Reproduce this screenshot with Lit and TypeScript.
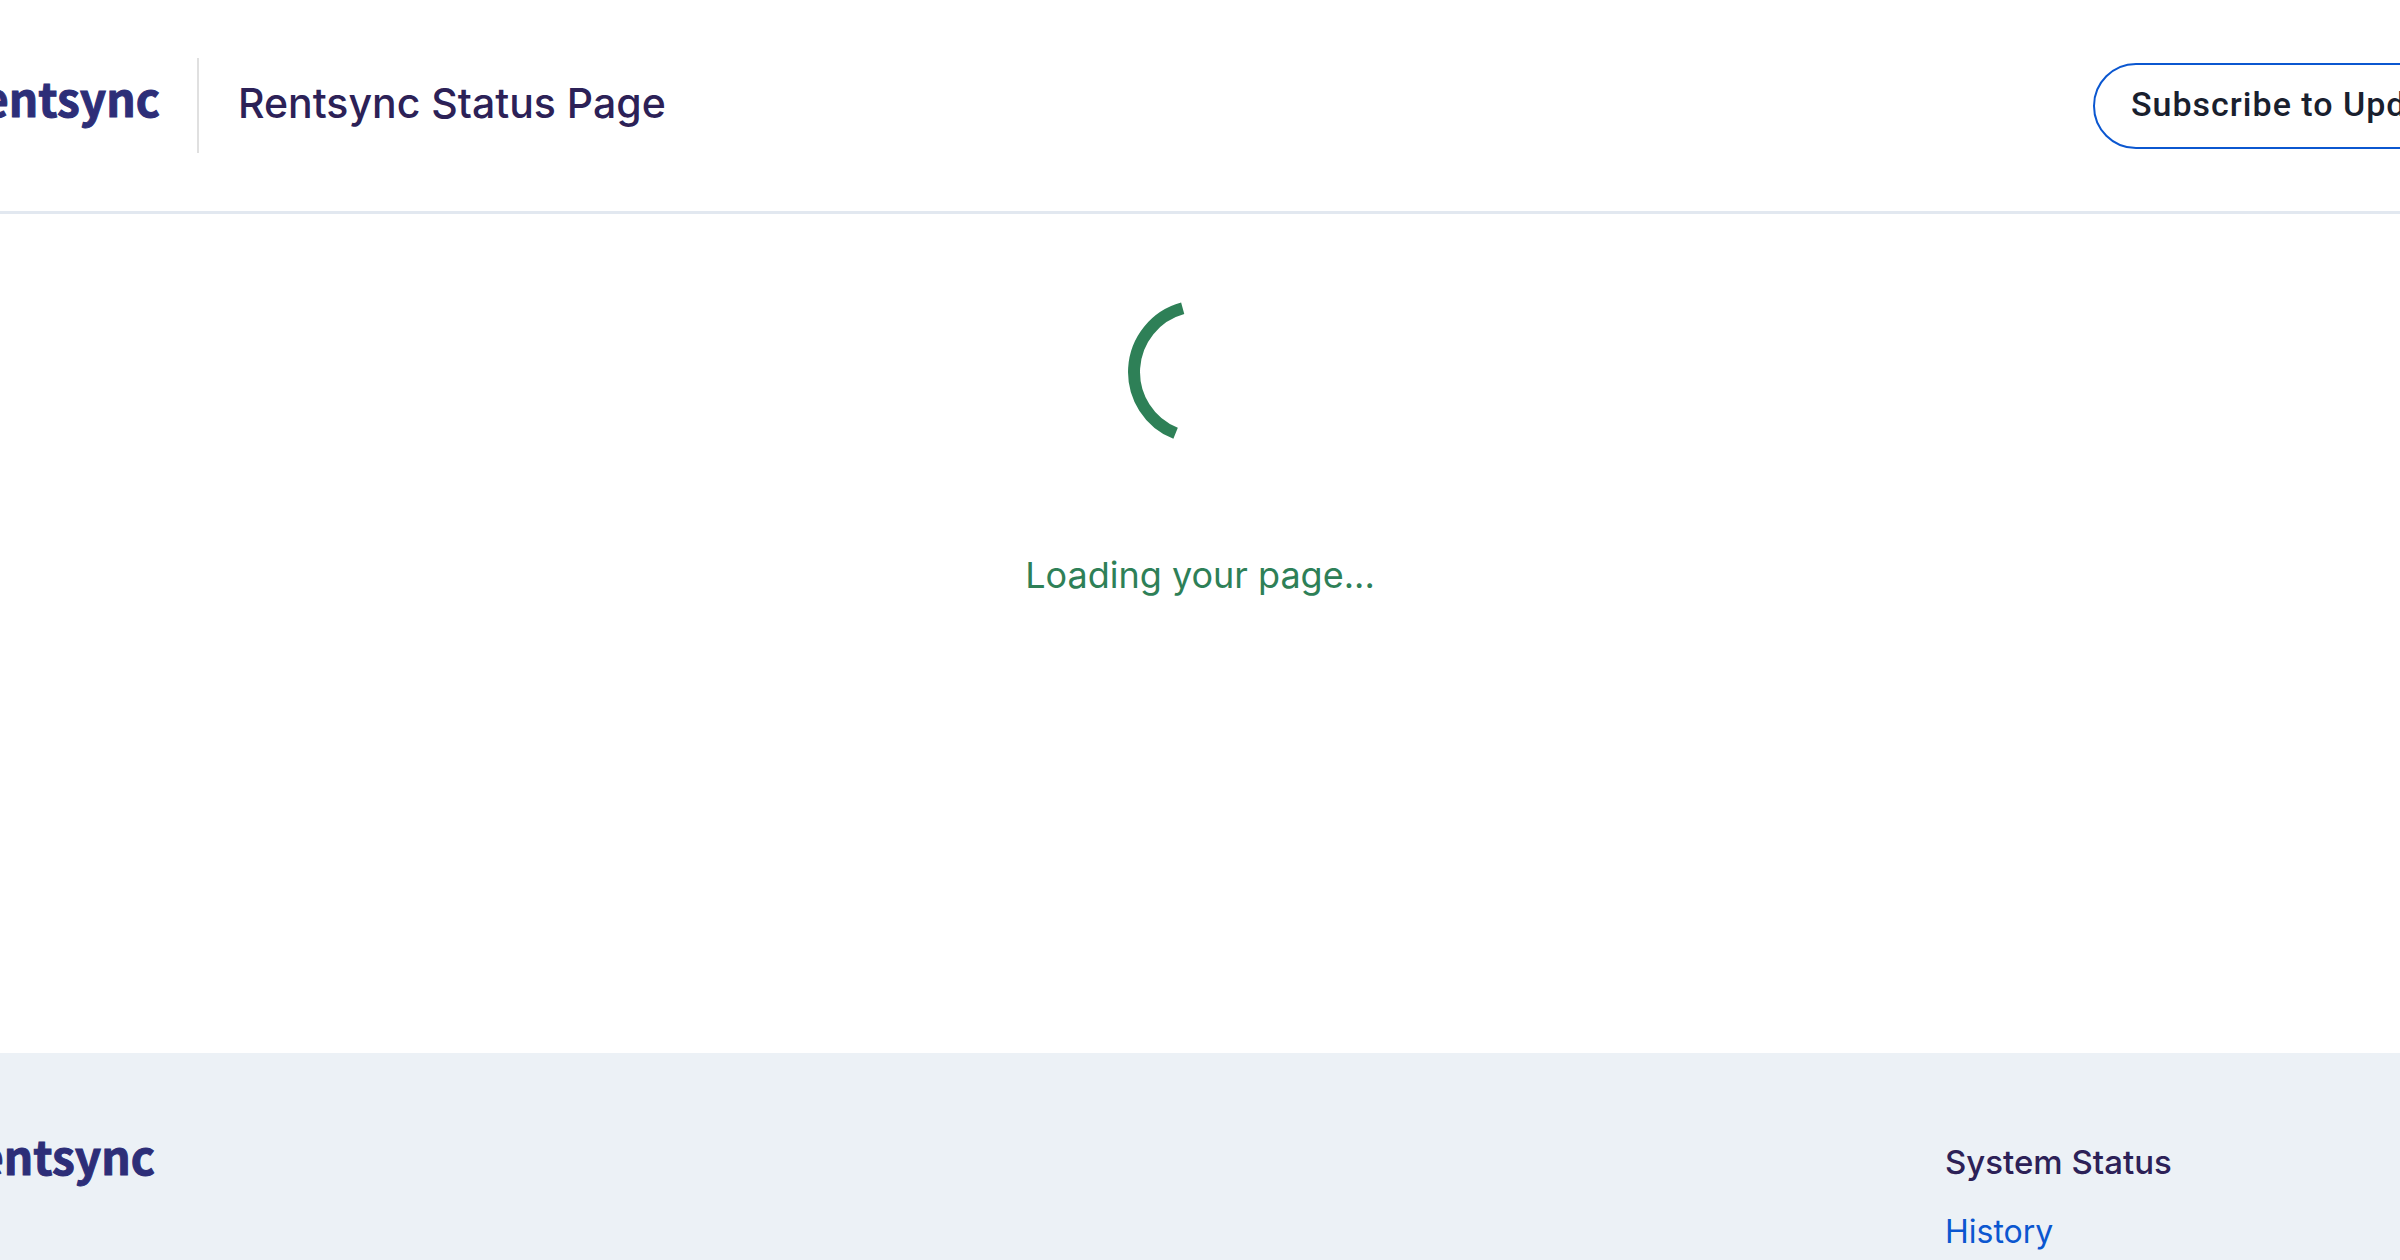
import { LitElement, html, css } from "lit";
import { customElement } from "lit/decorators.js";

@customElement("app-root")
export class AppRoot extends LitElement {
  static styles = css`
    :host {
      display: flex;
      flex-direction: column;
      min-height: 100vh;
      overflow: hidden;
      background: #fff;
      color: #2c2157;
      font-family: Inter, "Liberation Sans", sans-serif;
    }
    .header {
      display: flex;
      align-items: center;
      padding: 58px 0;
      border-bottom: 3px solid #e2e8f0;
    }
    .brand {
      display: flex;
      justify-content: flex-end;
      width: 160px;
      color: #2d2e78;
      font: 700 46px/60px "Noto Sans CJK SC", "Noto Sans", sans-serif;
      -webkit-text-stroke: 1px #2d2e78;
      text-decoration: none;
    }
    .header .brand {
      padding-right: 37px;
      margin-right: 39px;
      border-right: 2px solid #e0e0e0;
      line-height: 78px;
      height: 95px;
    }
    .title {
      flex: 1;
      margin: 0;
      padding-bottom: 6px;
      font-size: 41px;
      line-height: 56px;
      font-weight: 500;
      white-space: nowrap;
    }
    .action {
      display: flex;
      width: 307px;
    }
    .subscribe {
      flex: none;
      height: 86px;
      padding: 0 36px 4px;
      border: 2px solid #0b57d0;
      border-radius: 44px;
      background: #fff;
      color: #19202e;
      font: 500 34px/40px Roboto, "Liberation Sans", sans-serif;
      letter-spacing: 1px;
      white-space: nowrap;
      cursor: pointer;
    }
    .main {
      display: flex;
      flex-direction: column;
      align-items: center;
      gap: 104px;
      box-sizing: border-box;
      min-height: 839px;
      padding-top: 86px;
      color: #2e8057;
    }
    .spinner {
      width: 144px;
      height: 144px;
    }
    .loading {
      margin: 0;
      font-size: 36px;
      line-height: 54px;
    }
    .footer {
      display: flex;
      flex: 1;
      justify-content: space-between;
      align-items: flex-start;
      padding: 72px 0 0;
      background: #ecf1f6;
    }
    .footer .brand {
      width: 155px;
    }
    .links {
      width: 455px;
      padding-top: 13px;
      font-size: 32px;
      line-height: 48px;
    }
    .heading {
      margin: 0 0 22px;
      font-size: 33px;
      font-weight: 500;
    }
    .link {
      color: #0b57d0;
      text-decoration: none;
    }
  `;

  render() {
    return html`
      <header class="header">
        <a class="brand" href="#">Rentsync</a>
        <h1 class="title">Rentsync Status Page</h1>
        <div class="action">
          <button class="subscribe" type="button">Subscribe to Updates</button>
        </div>
      </header>
      <main class="main">
        <svg class="spinner" viewBox="0 0 144 144" fill="none" aria-hidden="true">
          <path d="M54.7 8.3A66 66 0 0 0 47.6 133.3" stroke="currentColor" stroke-width="12" />
        </svg>
        <p class="loading" role="status">Loading your page...</p>
      </main>
      <footer class="footer">
        <a class="brand" href="#">Rentsync</a>
        <nav class="links" aria-labelledby="status-heading">
          <h2 class="heading" id="status-heading">System Status</h2>
          <a class="link" href="#history">History</a>
        </nav>
      </footer>
    `;
  }
}
